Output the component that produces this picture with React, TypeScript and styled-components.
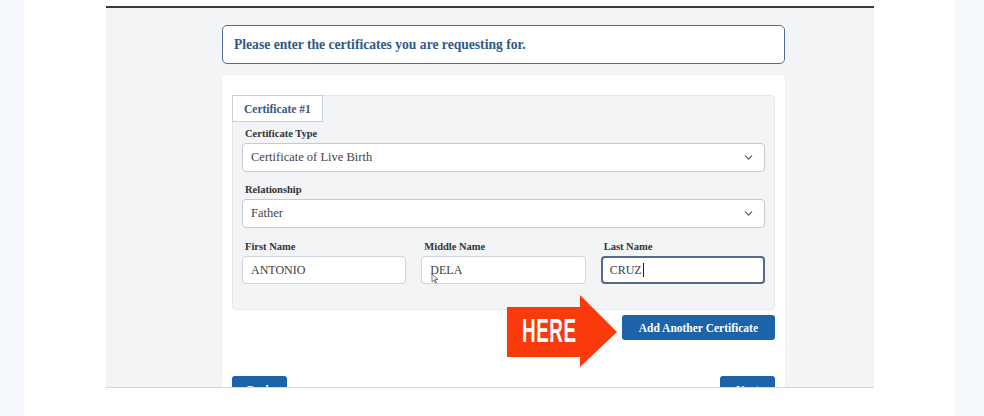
import { ReactNode } from 'react';
import styled, { createGlobalStyle } from 'styled-components';
import { ChevronDown } from 'lucide-react';

const GlobalStyle = createGlobalStyle`
  html, body {
    margin: 0;
    padding: 0;
    background: #ffffff;
  }
  body {
    font-family: "Liberation Serif", "DejaVu Serif", serif;
  }
`;

const Page = styled.div`
  display: flex;
  width: 984px;
  height: 416px;
  overflow: hidden;
  background: #ffffff;
`;

const Strip = styled.div<{ $w: number; $bg?: string }>`
  flex: 0 0 ${p => p.$w}px;
  background: ${p => p.$bg || '#ffffff'};
`;

const Frame = styled.div`
  flex: 0 0 768px;
  box-sizing: border-box;
  margin-top: 6px;
  height: 382px;
  border-top: 2px solid #3a3a3a;
  border-bottom: 1px solid #d4d6d9;
  background: #f3f4f6;
  overflow: hidden;
  padding-left: 116px;
`;

const Column = styled.div`
  width: 563px;
  display: flex;
  flex-direction: column;
`;

const Notice = styled.div`
  margin-top: 17px;
  height: 39px;
  box-sizing: border-box;
  border: 1.5px solid #4d6f91;
  border-radius: 5px;
  background: #ffffff;
  display: flex;
  align-items: center;
  padding-left: 11px;
  font-weight: bold;
  font-size: 13.6px;
  color: #2f5b86;
`;

const Card = styled.div`
  margin-top: 11px;
  background: #ffffff;
  border-radius: 4px;
  padding: 20px 10px 40px;
  display: flex;
  flex-direction: column;
  box-shadow: 0 0 2px rgba(0, 0, 0, 0.04);
`;

const Panel = styled.div`
  background: #f3f4f6;
  border: 1px solid #e6e8eb;
  border-radius: 4px;
  padding-bottom: 25px;
  display: flex;
  flex-direction: column;
`;

const Tab = styled.div`
  align-self: flex-start;
  margin: -1px 0 0 -1px;
  height: 27px;
  box-sizing: border-box;
  padding: 0 11px;
  display: flex;
  align-items: center;
  background: #ffffff;
  border: 1px solid #c9d0d8;
  font-weight: bold;
  font-size: 11.5px;
  color: #2f5b86;
`;

const Fields = styled.div`
  padding: 5px 9px 0;
  display: flex;
  flex-direction: column;
`;

const Group = styled.div<{ $top?: number }>`
  display: flex;
  flex-direction: column;
  margin-top: ${p => p.$top || 0}px;
  min-width: 0;
`;

const Label = styled.label`
  font-weight: bold;
  font-size: 10.5px;
  color: #333333;
  padding-left: 3px;
  height: 14px;
  line-height: 14px;
  margin-bottom: 2px;
`;

const Select = styled.div`
  height: 29px;
  box-sizing: border-box;
  background: #ffffff;
  border: 1px solid #c3cad4;
  border-radius: 4px;
  display: flex;
  align-items: center;
  justify-content: space-between;
  padding: 0 9px 0 8px;
  font-size: 12.5px;
  color: #444444;
`;

const NameRow = styled.div`
  display: grid;
  grid-template-columns: repeat(3, 1fr);
  column-gap: 15px;
  margin-top: 12px;
`;

const Input = styled.div<{ $focused?: boolean }>`
  height: 28px;
  box-sizing: border-box;
  background: #ffffff;
  border: ${p => (p.$focused ? '2px solid #56688c' : '1px solid #cdd5de')};
  border-radius: 4px;
  display: flex;
  align-items: center;
  padding-left: ${p => (p.$focused ? 7 : 8)}px;
  font-size: 12px;
  color: #3d3d3d;
  position: relative;
`;

const Caret = styled.span`
  display: inline-block;
  width: 1px;
  height: 14px;
  background: #222;
  margin-left: 1px;
`;

const Pointer = styled.svg`
  position: absolute;
  left: 9px;
  top: 16px;
`;

const ActionRow = styled.div`
  display: flex;
  justify-content: flex-end;
  margin-top: 5px;
  position: relative;
`;

const Button = styled.button`
  height: 25px;
  border: none;
  border-radius: 3px;
  background: #1d63a7;
  color: #ffffff;
  font-family: "Liberation Serif", serif;
  font-weight: bold;
  font-size: 11.5px;
  padding: 0 17px;
  cursor: pointer;
`;

const NavRow = styled.div`
  display: flex;
  justify-content: space-between;
  margin-top: 36px;
`;

const NavButton = styled(Button)`
  width: 55px;
  padding: 0;
  height: 28px;
`;

const Arrow = styled.div`
  position: absolute;
  left: 275px;
  top: -20px;
  width: 110px;
  height: 72px;
`;

const ArrowLabel = styled.span`
  position: absolute;
  left: 15px;
  top: 19px;
  font-family: "Liberation Sans", "DejaVu Sans", sans-serif;
  font-size: 33px;
  line-height: 33px;
  font-weight: bold;
  color: #ffffff;
  transform: scaleX(0.57);
  transform-origin: left center;
  letter-spacing: 1px;
`;

function Field({ label, children, top }: { label: string; children: ReactNode; top?: number }) {
  return (
    <Group $top={top}>
      <Label>{label}</Label>
      {children}
    </Group>
  );
}

export default function App() {
  return (
    <>
      <GlobalStyle />
      <Page>
        <Strip $w={24} $bg="#f4f8fc" />
        <Strip $w={82} />
        <Frame>
          <Column>
            <Notice>Please enter the certificates you are requesting for.</Notice>
            <Card>
              <Panel>
                <Tab>Certificate #1</Tab>
                <Fields>
                  <Field label="Certificate Type">
                    <Select>
                      Certificate of Live Birth
                      <ChevronDown size={13} color="#555" strokeWidth={2} />
                    </Select>
                  </Field>
                  <Field label="Relationship" top={11}>
                    <Select>
                      Father
                      <ChevronDown size={13} color="#555" strokeWidth={2} />
                    </Select>
                  </Field>
                  <NameRow>
                    <Field label="First Name">
                      <Input>ANTONIO</Input>
                    </Field>
                    <Field label="Middle Name">
                      <Input>
                        DELA
                        <Pointer width="8" height="11" viewBox="0 0 8 11">
                          <path d="M1 1 L1 9 L3 7 L4.5 10 L5.5 9.5 L4 6.5 L7 6.5 Z" fill="#fff" stroke="#555" strokeWidth="0.8" />
                        </Pointer>
                      </Input>
                    </Field>
                    <Field label="Last Name">
                      <Input $focused>
                        CRUZ<Caret />
                      </Input>
                    </Field>
                  </NameRow>
                </Fields>
              </Panel>
              <ActionRow>
                <Arrow>
                  <svg width="110" height="72" viewBox="0 0 110 72">
                    <polygon points="0,12 73,12 73,0 110,37 73,72 73,62 0,62" fill="#fb3a0c" />
                  </svg>
                  <ArrowLabel>HERE</ArrowLabel>
                </Arrow>
                <Button>Add Another Certificate</Button>
              </ActionRow>
              <NavRow>
                <NavButton>Back</NavButton>
                <NavButton>Next</NavButton>
              </NavRow>
            </Card>
          </Column>
        </Frame>
        <Strip $w={81} />
        <Strip $w={29} $bg="#f4f8fc" />
      </Page>
    </>
  );
}
